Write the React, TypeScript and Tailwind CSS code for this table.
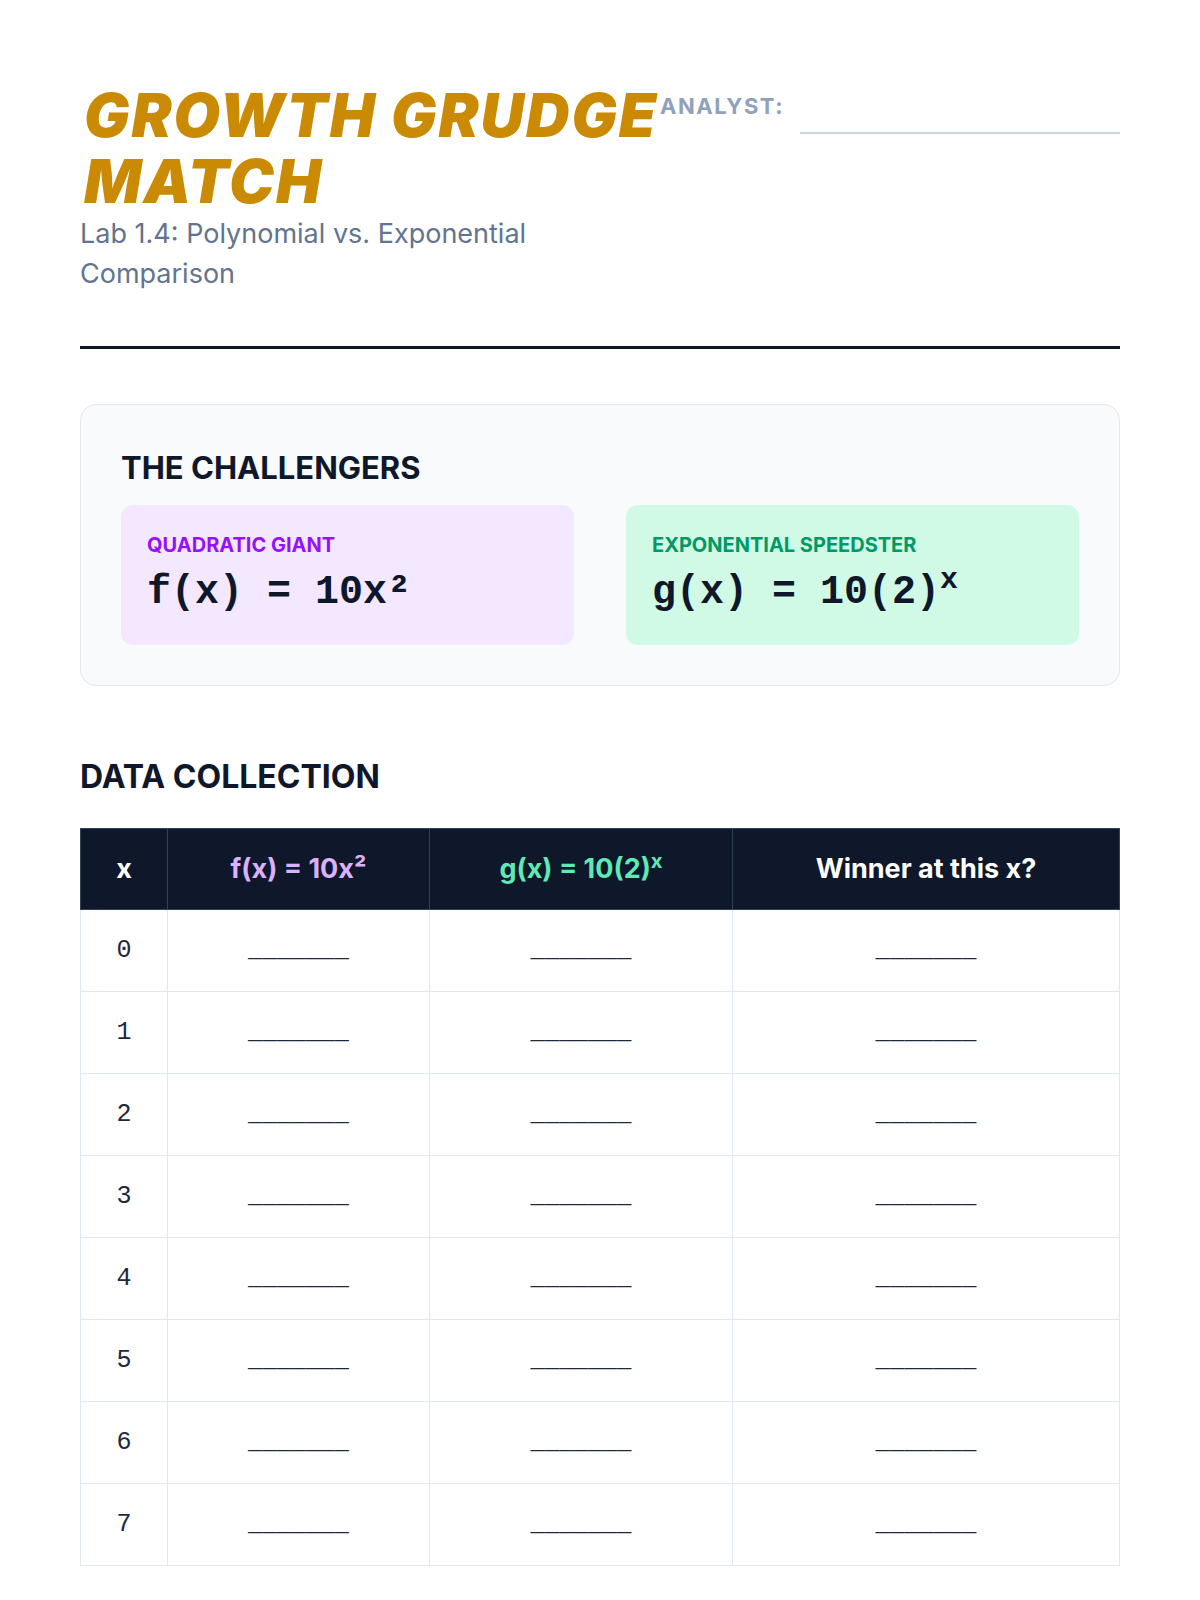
import React from 'react';

const rows = [0, 1, 2, 3, 4, 5, 6, 7];
const blank = '_______';

function App() {
    return (
        <div className="min-h-screen bg-white font-['Inter',sans-serif] text-slate-900">
            <div className="px-20 pt-[82px] pb-20">
                {/* header */}
                <div className="flex items-start">
                    <div className="w-[580px] shrink-0">
                        <h1 className="pl-1 text-[60px] leading-[66px] font-black italic uppercase text-[#ca8a04] tracking-[0.035em]">
                            Growth Grudge Match
                        </h1>
                        <p className="mt-0 max-w-[500px] text-[27px] leading-10 text-slate-500">
                            Lab 1.4: Polynomial vs. Exponential Comparison
                        </p>
                    </div>
                    <div className="flex flex-1 items-start gap-4 pt-[10px]">
                        <span className="text-[22px] leading-7 font-bold tracking-[0.07em] text-slate-400">ANALYST:</span>
                        <div className="flex-1 h-[42px] border-b-2 border-slate-300" />
                    </div>
                </div>

                <div className="mt-[52px] border-t-[3px] border-slate-900" />

                {/* challengers */}
                <div className="mt-[55px] rounded-2xl border border-slate-200 bg-slate-50 px-10 pt-[45px] pb-10">
                    <h2 className="text-[31px] leading-9 font-bold uppercase text-slate-900">The Challengers</h2>
                    <div className="mt-[19px] grid grid-cols-2 gap-[52px]">
                        <div className="rounded-xl bg-purple-100 px-[26px] pt-[26px] pb-6">
                            <div className="text-xl leading-7 font-bold uppercase text-purple-600">Quadratic Giant</div>
                            <div className="mt-[6px] font-['Liberation_Mono',monospace] text-[40px] leading-[56px] font-bold text-slate-900">
                                f(x) = 10x²
                            </div>
                        </div>
                        <div className="rounded-xl bg-emerald-100 px-[26px] pt-[26px] pb-6">
                            <div className="text-xl leading-7 font-bold uppercase text-emerald-600">Exponential Speedster</div>
                            <div className="mt-[6px] font-['Liberation_Mono',monospace] text-[40px] leading-[56px] font-bold text-slate-900">
                                g(x) = 10(2)<sup>x</sup>
                            </div>
                        </div>
                    </div>
                </div>

                {/* data table */}
                <h2 className="mt-[73px] text-[32px] leading-9 font-bold uppercase text-slate-900">Data Collection</h2>
                <table className="mt-[33px] w-full border-collapse table-fixed">
                    <thead>
                        <tr className="bg-slate-900 text-[27px] leading-8 font-semibold">
                            <th className="w-[87px] border border-slate-700 py-6 text-white">x</th>
                            <th className="w-[262px] border border-slate-700 py-6 text-purple-300">f(x) = 10x²</th>
                            <th className="w-[303px] border border-slate-700 py-6 text-emerald-300">
                                g(x) = 10(2)<sup>x</sup>
                            </th>
                            <th className="border border-slate-700 py-6 text-white">Winner at this x?</th>
                        </tr>
                    </thead>
                    <tbody>
                        {rows.map((x) => (
                            <tr key={x}>
                                <td className="border border-slate-200 py-6 text-center font-['Liberation_Mono',monospace] text-[25px] leading-[33px] text-slate-800">
                                    {x}
                                </td>
                                {[0, 1, 2].map((c) => (
                                    <td
                                        key={c}
                                        className="border border-slate-200 py-6 text-center font-['Liberation_Mono',monospace] text-2xl leading-[33px] font-bold text-slate-800"
                                    >
                                        {blank}
                                    </td>
                                ))}
                            </tr>
                        ))}
                    </tbody>
                </table>
            </div>
        </div>
    );
}

export default App;
